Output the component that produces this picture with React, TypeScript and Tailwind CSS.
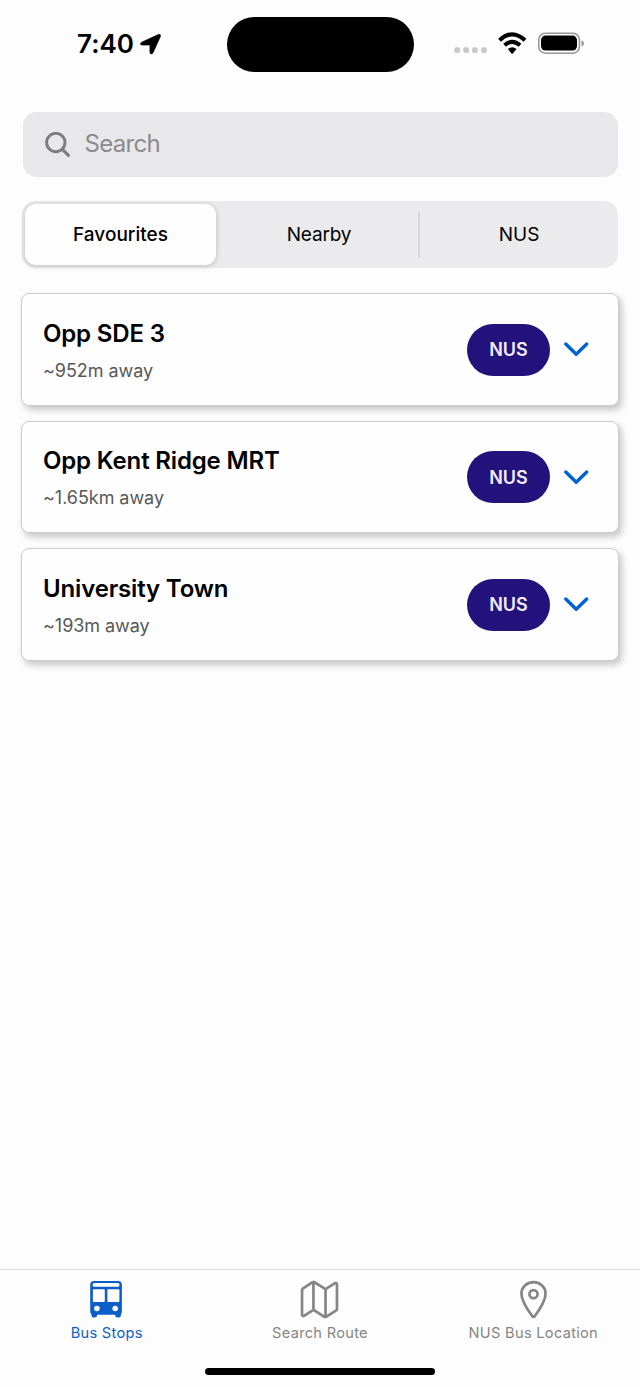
import React from "react";
import { IoMapOutline, IoLocationOutline } from "react-icons/io5";

const stops = [
  { name: "Opp SDE 3", distance: "~952m away" },
  { name: "Opp Kent Ridge MRT", distance: "~1.65km away" },
  { name: "University Town", distance: "~193m away" },
];

function StatusBar() {
  return (
    <header className="flex h-[112px] items-start">
      <div className="flex h-[87px] w-[226.5px] items-center pl-[77px]">
        <span className="text-[26px] leading-8 font-semibold tracking-[0.05px] whitespace-nowrap">7:40</span>
        <svg className="ml-[6px] h-[22px] w-[22px] shrink-0" viewBox="0 0 22 22">
          <path
            d="M1.6 9.2 18.2 1.6Q21.2.6 20.4 3.6L13.2 19.6Q12.6 20.9 11.4 20.9Q10 20.9 9.9 19.4V12.1H2Q.5 12 .5 10.8Q.5 9.8 1.6 9.2Z"
            fill="black"
            stroke="black"
            strokeWidth="0.6"
          />
        </svg>
      </div>
      <div className="mt-[16.5px] h-[55px] w-[187px] rounded-full bg-black" />
      <div className="flex h-[87px] items-center pl-[40.5px]">
        <svg className="h-[30px] w-[132px]" viewBox="0 0 132 30">
          <g fill="#c8c8c8">
            <rect x="0.3" y="18.3" width="5.8" height="5.8" rx="2" />
            <rect x="9.2" y="18.3" width="5.8" height="5.8" rx="2" />
            <rect x="18" y="18.3" width="5.8" height="5.8" rx="2" />
            <rect x="27" y="18.3" width="5.8" height="5.8" rx="2" />
          </g>
          <g fill="none" stroke="black" strokeWidth="4">
            <path d="M45.5 11.2Q58.2-.6 71 11.2" />
            <path d="M50.6 16.3Q58.2 9.4 66 16.3" />
          </g>
          <path d="M53.9 20.1Q58.2 16.6 62.6 20.1L58.9 24.4Q58.2 25 57.5 24.4Z" fill="black" />
          <rect x="84.8" y="4.2" width="40.6" height="20" rx="6.5" fill="none" stroke="#969696" strokeWidth="1.5" />
          <rect x="87" y="6.6" width="36" height="15" rx="4.5" fill="black" />
          <path d="M127.5 11.2Q130 12 130 14.2T127.5 17.5Z" fill="#969696" />
        </svg>
      </div>
    </header>
  );
}

function SearchField() {
  return (
    <div className="mx-[22.5px] flex h-[65px] items-center rounded-[14px] bg-[#e8e8ea] pl-[22.5px]">
      <svg className="h-[26px] w-[26px]" viewBox="0 0 26 26" fill="none" stroke="#7c7c7e" strokeLinecap="round">
        <circle cx="10.8" cy="10.5" r="9.2" strokeWidth="2.9" />
        <path d="m17.4 17.3 6 6" strokeWidth="3.1" />
      </svg>
      <span className="-mt-[1px] ml-[13.5px] text-[24px] leading-8 tracking-[-0.7px] text-[#8b8b8d]">Search</span>
    </div>
  );
}

function Segments() {
  return (
    <div className="mx-[22px] mt-6 flex h-[67px] items-center rounded-[14px] bg-[#ebebed] p-[3px] text-[19px] text-black">
      <div className="flex h-[61px] w-[191px] items-center justify-center rounded-[11px] bg-[#fefefe] pt-[2px] font-medium shadow-[0_1px_5px_1px_rgba(0,0,0,0.15)]">
        Favourites
      </div>
      <div className="flex w-[202px] items-center justify-center pt-[2px] pl-[4px] tracking-[-0.15px]">Nearby</div>
      <div className="h-[46px] w-[2px] rounded-full bg-[#d7d7da]" />
      <div className="flex flex-1 items-center justify-center pt-[2px] pl-[3px]">NUS</div>
    </div>
  );
}

function StopCard({ name, distance }: { name: string; distance: string }) {
  return (
    <article className="flex h-[112.5px] items-center rounded-[8px] border border-[#cbcbcd] bg-[#fefefe] pr-[28px] pl-[21px] shadow-[3px_4px_7px_rgba(0,0,0,0.22)]">
      <div className="flex flex-1 flex-col gap-[7px] pt-[3px]">
        <h2 className="text-[24px] leading-[33px] font-semibold tracking-[-0.16px]">{name}</h2>
        <p className="text-[18px] leading-[28px] tracking-[-0.05px] text-[#58585a]">{distance}</p>
      </div>
      <div className="mt-[0.5px] flex h-[52px] w-[83px] items-center justify-center rounded-full bg-[#24127c] text-[18px] font-semibold text-[#f1edff]">
        NUS
      </div>
      <svg
        className="ml-[12px] h-[28px] w-[28px]"
        viewBox="0 0 28 28"
        fill="none"
        stroke="#0061d0"
        strokeWidth="3.4"
        strokeLinecap="round"
        strokeLinejoin="round"
      >
        <path d="M3.8 9 14.2 19.2 24.7 9" />
      </svg>
    </article>
  );
}

function BusIcon() {
  return (
    <svg className="h-[43px] w-[43px]" viewBox="0 0 43 43">
      <path
        d="M9.1 2.9H33.1Q36.9 2.9 36.9 6.7V33.2Q36.9 35.7 35.9 36.2V37.2Q35.9 39.4 33.6 39.4H32.6Q30.1 39.4 30.1 37.2V36.7H12.1V37.2Q12.1 39.4 9.6 39.4H8.6Q6.4 39.4 6.4 37.2V36.2Q5.2 35.7 5.2 33.2V6.7Q5.2 2.9 9.1 2.9Z"
        fill="#0c5fc9"
      />
      <g fill="#fdfdfd">
        <rect x="7.7" y="5.1" width="26.7" height="3.7" rx="1.5" />
        <rect x="7.9" y="11.2" width="11.9" height="12.8" rx="1" />
        <rect x="22.4" y="11.2" width="12" height="12.8" rx="1" />
        <circle cx="11.9" cy="30.5" r="2.8" />
        <circle cx="30.2" cy="30.5" r="2.8" />
      </g>
    </svg>
  );
}

function TabBar() {
  return (
    <nav className="flex h-[118px] flex-col border-t border-[#dedee0] pt-[7.5px]">
      <div className="grid grid-cols-3 text-[14.6px] leading-5 tracking-[0.3px] text-[#858585]">
        <div className="flex flex-col items-center text-[#0c5fc9]">
          <BusIcon />
          <span className="mt-[2px]">Bus Stops</span>
        </div>
        <div className="flex flex-col items-center">
          <IoMapOutline className="h-[43px] w-[43px]" />
          <span className="mt-[2px]">Search Route</span>
        </div>
        <div className="flex flex-col items-center">
          <IoLocationOutline className="h-[43px] w-[43px]" />
          <span className="mt-[2px] whitespace-nowrap">NUS Bus Location</span>
        </div>
      </div>
      <div className="mx-auto mt-[25px] h-[7px] w-[230px] rounded-full bg-black" />
    </nav>
  );
}

export default function App() {
  return (
    <main className="flex h-[1387px] w-[640px] flex-col overflow-hidden bg-[#fdfdfd] font-['Inter',sans-serif] text-black">
      <StatusBar />
      <SearchField />
      <Segments />
      <section className="mx-[21px] mt-[25px] flex flex-1 flex-col gap-[15px]">
        {stops.map((stop) => (
          <StopCard key={stop.name} {...stop} />
        ))}
      </section>
      <TabBar />
    </main>
  );
}
